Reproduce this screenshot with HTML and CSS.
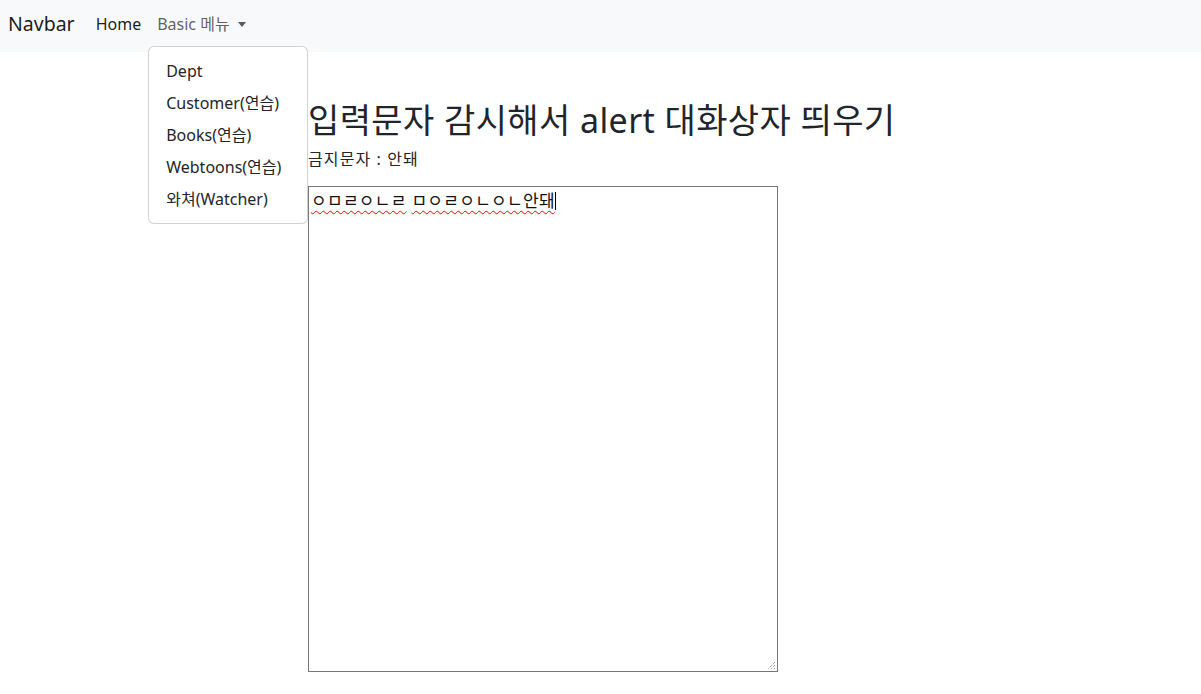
FILE: index.html
```html
<!DOCTYPE html>
<html lang="ko">
<head>
<meta charset="utf-8">
<title>Navbar</title>
<link rel="stylesheet" href="styles.css">
</head>
<body>
<nav class="navbar">
  <a class="brand" href="#">Navbar</a>
  <ul class="nav">
    <li><a class="nav-link active" href="#">Home</a></li>
    <li class="dropdown">
      <a class="nav-link toggle" href="#">Basic 메뉴<span class="caret"></span></a>
      <ul class="menu">
        <li><a class="item" href="#">Dept</a></li>
        <li><a class="item" href="#">Customer(연습)</a></li>
        <li><a class="item" href="#">Books(연습)</a></li>
        <li><a class="item" href="#">Webtoons(연습)</a></li>
        <li><a class="item" href="#">와쳐(Watcher)</a></li>
      </ul>
    </li>
  </ul>
</nav>
<main class="content">
  <h2 class="title">입력문자 감시해서 alert 대화상자 띄우기</h2>
  <p class="banned">금지문자 : 안돼</p>
  <div class="textbox" role="textbox" aria-multiline="true"><span class="typo">ㅇㅁㄹㅇㄴㄹ</span> <span class="typo">ㅁㅇㄹㅇㄴㅇㄴ안돼</span><span class="cursor"></span>
    <svg class="grip" width="10" height="10" viewBox="0 0 10 10"><path d="M9 2 L2 9 M9 5 L5 9 M9 8 L8 9" stroke="#6b6b6b" stroke-width="1" stroke-dasharray="1 1" fill="none"/></svg>
  </div>
</main>
</body>
</html>
```
FILE: styles.css
```css
* { box-sizing: border-box; }
html, body { margin: 0; padding: 0; }
body {
  font-family: "Noto Sans", "Noto Sans CJK KR", sans-serif;
  font-size: 16px;
  line-height: 1.5;
  color: #212529;
  background: #fff;
}
a { text-decoration: none; }
ul { list-style: none; margin: 0; padding: 0; }

.navbar {
  height: 52px;
  background: #f8f9fa;
  display: flex;
  align-items: center;
  padding: 0 8px 4px;
}
.brand {
  font-size: 19.5px;
  line-height: 30px;
  color: rgba(0,0,0,.9);
  margin-right: 13px;
}
.nav { display: flex; align-items: center; }
.nav-link {
  display: flex;
  align-items: center;
  padding: 8px 8px;
  color: rgba(33,37,41,.72);
  line-height: 24px;
}
.nav-link.active { color: rgba(0,0,0,.9); }
.caret {
  display: inline-block;
  margin-left: 8px;
  width: 0; height: 0;
  border-top: 5px solid rgba(33,37,41,.75);
  border-left: 4px solid transparent;
  border-right: 4px solid transparent;
}
.dropdown { position: relative; }
.menu {
  position: absolute;
  left: -1px;
  top: 42px;
  width: 160px;
  padding: 8px 0;
  background: #fff;
  border: 1px solid rgba(0,0,0,.175);
  border-radius: 6px;
  z-index: 10;
}
.item {
  display: block;
  padding: 4px 17px;
  line-height: 24px;
  color: #212529;
  white-space: nowrap;
}

.content {
  padding: 49px 0 0 308px;
}
.title {
  margin: 0 0 8px;
  font-size: 34px;
  font-weight: 400;
  line-height: 38px;
  letter-spacing: 0.4px;
}
.banned {
  margin: 0 0 15px;
  font-size: 16px;
  letter-spacing: 1.1px;
}
.textbox {
  position: relative;
  width: 470px;
  height: 486px;
  border: 1px solid #767676;
  padding: 2px 2px;
  font-size: 17px;
  line-height: 24px;
  color: #111;
  letter-spacing: 0.3px;
}
.typo {
  text-decoration: underline wavy #f00;
  text-decoration-thickness: 1px;
  text-underline-offset: 3px;
}
.cursor {
  display: inline-block;
  width: 1px;
  height: 18px;
  background: #000;
  vertical-align: -3px;
}
.grip {
  position: absolute;
  right: 1px;
  bottom: 1px;
}
```
